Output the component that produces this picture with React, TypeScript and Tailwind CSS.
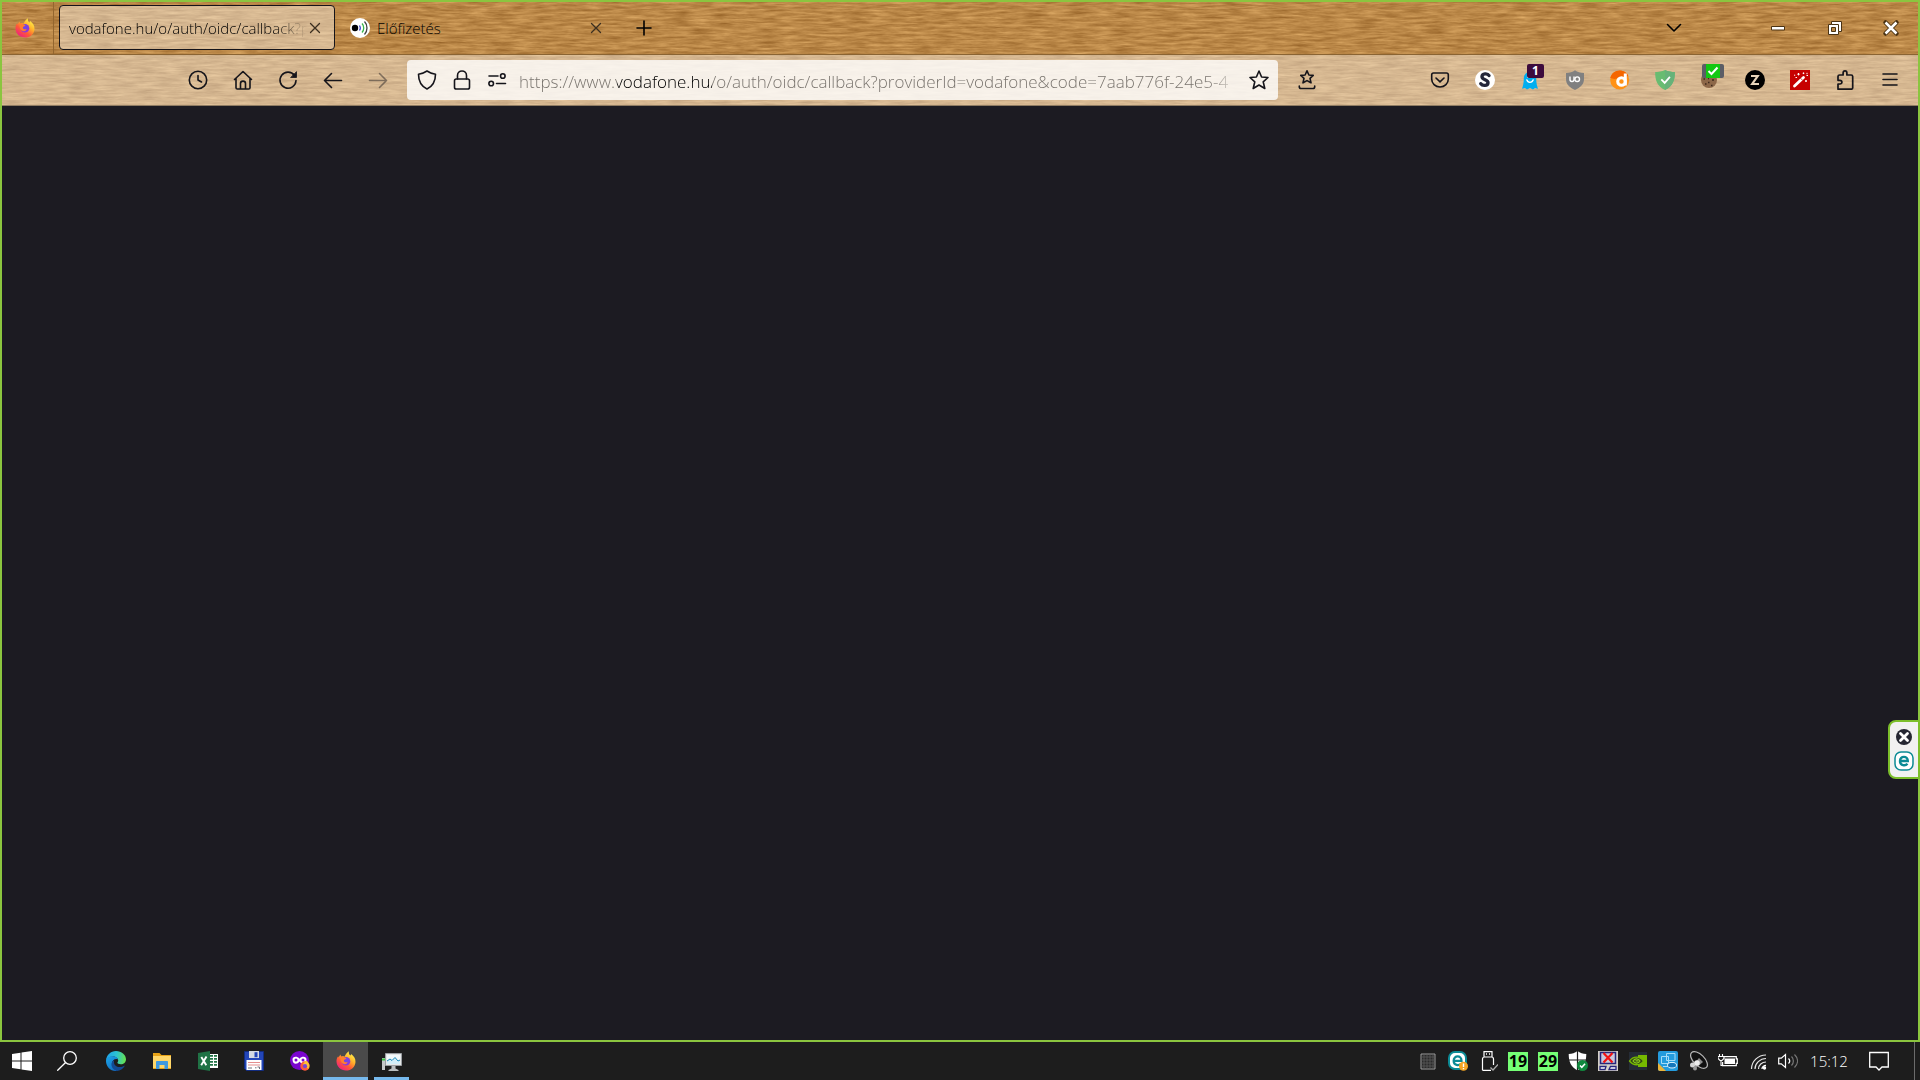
import { ReactNode, useState } from 'react';

const PAGE_URL =
  'https://www.vodafone.hu/o/auth/oidc/callback?providerId=vodafone&code=7aab776f-24e5-4';

interface IconButtonProps {
  label: string;
  children: ReactNode;
  disabled?: boolean;
}

function IconButton({ label, children, disabled }: IconButtonProps) {
  return (
    <button
      aria-label={label}
      disabled={disabled}
      className="relative flex h-10 w-[45px] shrink-0 items-center justify-center text-[#15141a] disabled:opacity-45"
    >
      {children}
    </button>
  );
}

// line icon on a 20px grid
function Line({ children, width = 1.6 }: { children: ReactNode; width?: number }) {
  return (
    <svg
      className="size-5 shrink-0"
      viewBox="0 0 20 20"
      fill="none"
      stroke="currentColor"
      strokeWidth={width}
      strokeLinecap="round"
      strokeLinejoin="round"
    >
      {children}
    </svg>
  );
}

function Pic({ children }: { children: ReactNode }) {
  return (
    <svg className="size-5 shrink-0" viewBox="0 0 20 20" fill="none">
      {children}
    </svg>
  );
}

function Firefox({ id }: { id: string }) {
  return (
    <Pic>
      <defs>
        <linearGradient id={`${id}-a`} x1="16" y1="2" x2="4" y2="18" gradientUnits="userSpaceOnUse">
          <stop offset="0" stopColor="#fff14a" />
          <stop offset="0.35" stopColor="#ffb02a" />
          <stop offset="0.65" stopColor="#ff5a36" />
          <stop offset="1" stopColor="#f0217e" />
        </linearGradient>
        <radialGradient id={`${id}-b`} cx="10" cy="9" r="5" gradientUnits="userSpaceOnUse">
          <stop offset="0" stopColor="#6a4be8" />
          <stop offset="1" stopColor="#9136d8" />
        </radialGradient>
      </defs>
      <path
        d="M13 .3c-.6 1.800.1 3.200 1.400 4.300.5-.3.700-.9.700-1.500C18 5.300 19.600 7.800 19.500 10.900 19.200 15.900 15.200 19.500 10 19.500S.6 15.600.5 10.500C.4 8.500 1.100 6.600 2.200 5.300L2.500 6.600 4.400 3.600 5.200 5.700C6.300 5.200 7.600 5.300 8.500 5.700 9.500 3.500 11 1.500 13 .3z"
        fill={`url(#${id}-a)`}
      />
      <circle cx="10" cy="10.300" r="4.300" fill={`url(#${id}-b)`} />
      <path
        d="M4.500 6c1-.7 2.800-.5 3.700.300.6.400 1.500.6 2.200.7-.2.900-1 1.500-2.200 1.700-.5.700-.3 1.900.6 2.400 1 .5 2-.3 2.900.2-.6 1.300-1.700 2-3 1.900C6 13 4.200 10.500 4.500 6z"
        fill="#ff7e2e"
      />
    </Pic>
  );
}

function Edge() {
  return (
    <Pic>
      <defs>
        <linearGradient id="edge-top" x1="1" y1="5" x2="19" y2="8" gradientUnits="userSpaceOnUse">
          <stop offset="0" stopColor="#1fa6e8" />
          <stop offset="0.5" stopColor="#2cc3d2" />
          <stop offset="1" stopColor="#62e055" />
        </linearGradient>
        <linearGradient id="edge-low" x1="0" y1="8" x2="10" y2="20" gradientUnits="userSpaceOnUse">
          <stop offset="0" stopColor="#1ba0e6" />
          <stop offset="1" stopColor="#1268bd" />
        </linearGradient>
      </defs>
      <path d="M0 9.500C.4 4 4.800 0 10 0c5.500 0 10 3.800 10 8.300 0 3-2.300 5-5.200 5-2 0-3.400-.8-3.400-1.500 0-.6.800-1 .8-2.300C12.200 7.300 9.800 5.500 7 5.500c-3.300 0-6 1.700-7 4z" fill="url(#edge-top)" />
      <path d="M0 10c0-3 3.200-4.800 6.500-4.800 2.700 0 5 1.200 5.600 3.300C9.400 7.200 6 9 6 12.800c0 3.200 2.200 5.800 5.200 7C5 20.800 0 16 0 10z" fill="url(#edge-low)" />
      <path d="M8.300 9.200C7 12.800 9.500 16 13.500 16c2 0 3.600-.6 4.800-1.300.3-.2.600.1.400.4C17 18 14 20 10.800 19.900 7.200 18.700 5 15.700 5.500 12.500c.3-1.600 1.400-2.800 2.800-3.300z" fill="#134a93" />
    </Pic>
  );
}

const extensions = [
  {
    label: 'Stylus',
    icon: (
      <Pic>
        <circle cx="10" cy="10" r="10" fill="#fff" />
        <path d="M14 5.500C12.500 3 7.200 3.300 7 6.600c-.1 3.500 6.200 2.900 6 6.200-.3 3.200-5.500 3.300-7.200.9" stroke="#25273a" strokeWidth="3.400" strokeLinecap="round" />
      </Pic>
    ),
  },
  {
    label: 'Ghostery',
    icon: (
      <Pic>
        <path d="M10 2c-4 0-6.200 2.600-6.200 6.500 0 4.200-.8 7.500-1.800 10.300l3-.8 2 1.600 3-1.600 3 1.600 2-1.600 3 .8c-1-2.800-1.800-6.100-1.800-10.300C16.200 4.600 14 2 10 2z" fill="#00aef0" />
        <path d="M6.800 9.800c1 3.400 5.400 3.400 6.400 0" stroke="#fff" strokeWidth="1.300" strokeLinecap="round" />
        <circle cx="8" cy="7" r="1.100" fill="#fff" />
        <circle cx="12" cy="7" r="1.100" fill="#fff" />
      </Pic>
    ),
    badge: (
      <span className="absolute top-1 left-5 flex h-3.5 w-[17px] items-center justify-center rounded-xs bg-[#3d0b3d] text-[12px] leading-none font-bold text-white">
        1
      </span>
    ),
  },
  {
    label: 'uBlock Origin',
    icon: (
      <Pic>
        <path d="M10 .2C7.500 2 4.500 2.800 1 3v6c0 5.500 3.500 8.500 9 10.900 5.500-2.400 9-5.400 9-10.900V3C15.500 2.800 12.500 2 10 .2z" fill="#808080" />
        <path d="M5 6.500v3c0 2.700 4 2.700 4 0v-3" stroke="#fff" strokeWidth="1.400" />
        <circle cx="12.200" cy="9.200" r="2.300" stroke="#fff" strokeWidth="1.400" />
      </Pic>
    ),
  },
  {
    label: 'Search assistant',
    icon: (
      <Pic>
        <circle cx="9.700" cy="10" r="9.500" fill="#ff9114" />
        <path d="M.2 8C1.200 3.500 5 .5 9.700.5c4 0 7.300 2.200 8.700 5.500L12 7.500 4.500 9z" fill="#f56600" />
        <circle cx="11.500" cy="11.500" r="3.800" stroke="#fff" strokeWidth="3" />
        <path d="M15.300 3.500v12" stroke="#fff" strokeWidth="3" />
      </Pic>
    ),
  },
  {
    label: 'Safe browsing',
    icon: (
      <Pic>
        <path d="M10 0C7 1.500 3.500 2 .2 2c-.2 8 1.800 14 9.800 18 8-4 10-10 9.800-18C16.500 2 13 1.500 10 0z" fill="#68bc71" />
        <path d="M10 0c3 1.500 6.500 2 9.800 2 .2 8-1.800 14-9.800 18z" fill="#67b279" />
        <path d="M6.300 9.300l3.400 3.600 5.200-6" stroke="#fff" strokeWidth="1.800" />
      </Pic>
    ),
  },
  {
    label: 'Cookie manager',
    icon: (
      <Pic>
        <circle cx="9" cy="10" r="8" fill="#8d6748" />
        <path d="M3.500 9H5M8 12.500h1.500M12 10h2M5 14h1.500M11 15.500h1.500M8 8.500h1" stroke="#3e2a1c" strokeWidth="1.500" />
      </Pic>
    ),
    badge: (
      <span className="absolute top-1 left-[15px] flex h-3.5 w-[22px] items-center justify-center rounded-xs border-x-4 border-[#5b5d66] bg-[#12c812]">
        <svg className="h-3 w-3" viewBox="0 0 12 12" fill="none" stroke="#fff" strokeWidth="2">
          <path d="M1.500 6l3 3L10.500 2.500" />
        </svg>
      </span>
    ),
  },
  {
    label: 'Zotero',
    icon: (
      <Pic>
        <circle cx="10" cy="10" r="10" fill="#000" />
        <path d="M6 6h6.700L7.200 14h6.800" stroke="#e8d5bb" strokeWidth="2.200" />
      </Pic>
    ),
  },
  {
    label: 'Magic wand',
    icon: (
      <Pic>
        <path d="M0 0h20v20H0z" fill="#c60000" />
        <path d="M4.500 16L13.500 7.500" stroke="#fff" strokeWidth="2.800" strokeLinecap="round" />
        <path d="M10.500 8.200l2 2" stroke="#c60000" strokeWidth="0.800" />
        <path d="M8.500 3v2.400M7.300 4.200h2.400M13.500 2.500v1.600M12.700 3.300h1.600M16.500 5.500h1.500M16 10v2M15 11h2M5.500 7.500H7M4 5.200h1.200M17 2.800v1.400" stroke="#fff" strokeWidth="1" />
      </Pic>
    ),
  },
  {
    label: 'Extensions',
    icon: (
      <Line width={1.7}>
        <path d="M3 19.200V14h1.800c2.800 0 2.800-3.700 0-3.700H3V6.500C3 5.600 3.500 5 4.500 5h3.600V3.200c0-3 3.800-3 3.800 0V5h4.300c.9 0 1.500.6 1.500 1.500v11.200c0 .9-.6 1.500-1.500 1.500z" />
      </Line>
    ),
  },
  {
    label: 'Open application menu',
    icon: (
      <Line>
        <path d="M3 4h14M3 9.500h14M3 15h14" />
      </Line>
    ),
  },
];

const taskbarApps = [
  {
    label: 'Excel',
    icon: (
      <Pic>
        <path d="M11 3h9v14h-9z" fill="#fff" />
        <path d="M12 4h7v1.700h-7zM12 7h7v1.700h-7zM12 10h7v1.700h-7zM12 13h7v1.700h-7z" fill="#217346" />
        <path d="M15.500 4v12" stroke="#fff" />
        <path d="M0 2l12-2v20L0 18z" fill="#207245" />
        <path d="M3.300 6l5 8.200M8.500 5.600l-5.300 8.700" stroke="#fff" strokeWidth="1.900" />
      </Pic>
    ),
  },
  {
    label: 'Total Commander',
    icon: (
      <Pic>
        <path d="M.5.5h19v19h-17l-2-2z" fill="#2346b8" stroke="#122c80" />
        <path d="M5 0h10v7H5z" fill="#d5dae3" />
        <path d="M10.500 1.200h3v5h-3z" fill="#2346b8" />
        <path d="M2.500 9h15v10h-15z" fill="#fff" />
        <path d="M4 11.500h12M4 14h12" stroke="#e58f8f" strokeWidth="1.200" />
        <path d="M4 17h4M11 16.800h1.500M13.500 16h2v2" stroke="#70727c" />
      </Pic>
    ),
  },
  {
    label: 'Firefox private browsing',
    icon: (
      <Pic>
        <circle cx="9.500" cy="9.500" r="9.500" fill="#7a05cf" />
        <path d="M2.500 8.500c0-3.500 5-3.300 7-.8 2-2.500 7-2.700 7 .8 0 5-4.600 5.500-7 2-2.400 3.500-7 3-7-2z" fill="#fff" />
        <circle cx="6" cy="8.900" r="1.500" fill="#7a05cf" />
        <circle cx="13" cy="8.900" r="1.500" fill="#7a05cf" />
        <circle cx="15" cy="15" r="4.700" fill="#ff5b3b" />
        <path d="M16 9.500c3.500 2 4.300 6 2.200 8.600L13 13z" fill="#ffc034" />
        <circle cx="15" cy="15.200" r="2.100" fill="#7846d6" />
      </Pic>
    ),
  },
  { label: 'Firefox', icon: <Firefox id="ff-task" />, state: 'active' },
  {
    label: 'Resource monitor',
    icon: (
      <Pic>
        <path d="M3.500 2.500h16v12h-16z" fill="#e6e8e8" stroke="#9a9fa3" />
        <path d="M5 4h13v9H5z" fill="#f3fafc" />
        <path d="M5 10l3-2 2 1.500 3-3 3 3.500 2-1v4H5z" fill="#d3eef8" />
        <path d="M5 10l3-2 2 1.500 3-3 3 3.500 2-1" stroke="#1687b9" />
        <path d="M9.500 15h4v2.500l3 1.500v1h-10v-1l3-1.500z" fill="#b9bdbf" />
        <path d="M0 7h3v12H0z" fill="#c5c8c9" />
        <path d="M0 8.500h3" stroke="#35c23e" strokeWidth="2" />
      </Pic>
    ),
    state: 'open',
  },
];

function DateTile({ value }: { value: string }) {
  return (
    <span className="flex h-[19px] w-5 items-center justify-center bg-[#75ff75] text-[16px] leading-none font-bold text-black">
      {value}
    </span>
  );
}

const trayItems = [
  {
    label: 'CPU usage',
    icon: (
      <Pic>
        <path d="M3 3h14v15H3z" fill="#2a2a2a" stroke="#9b9b9b" />
        <path d="M6 3v15M9 3v15M12 3v15M15 3v15M3 6h14M3 9h14M3 12h14M3 15h14" stroke="#5b5b5b" strokeWidth=".8" />
      </Pic>
    ),
  },
  {
    label: 'ESET',
    icon: (
      <Pic>
        <rect x="1" y="1" width="17" height="17" rx="6" fill="#fff" stroke="#0b8a95" strokeWidth="2" />
        <path d="M6 9.800h7.500C13.500 4 5.700 4 5.700 9.700c0 5 5.300 5.200 7.300 3" stroke="#0b8a95" strokeWidth="2.300" />
        <circle cx="15.500" cy="15.300" r="4.500" fill="#f6a623" />
        <path d="M15.500 12.500v3.500M15.500 17v1.300" stroke="#fff" strokeWidth="1.400" />
      </Pic>
    ),
  },
  {
    label: 'Safely remove hardware',
    icon: (
      <Pic>
        <path d="M6 6V.7h8V6M4.500 19.300V8c0-1.200.8-2 2-2h7c1.200 0 2 .8 2 2v6M4.500 19.300H13" stroke="#fff" strokeWidth="1.200" />
        <path d="M8 3h1M11 3h1" stroke="#fff" strokeWidth="1.500" />
        <path d="M12.500 16.500l2.500 2.500 5-5.500" stroke="#aaa" strokeWidth="1.300" />
      </Pic>
    ),
  },
  { label: 'Day 19', icon: <DateTile value="19" /> },
  { label: 'Day 29', icon: <DateTile value="29" /> },
  {
    label: 'Windows Security',
    icon: (
      <Pic>
        <path d="M9.500 0C7 2 4 3 .7 3c0 8 2.300 13 8.800 16.500C16 16 18.300 11 18.300 3 15 3 12 2 9.500 0z" fill="#fff" />
        <path d="M9.500 0v20M0 9h19" stroke="#1d1d1d" strokeWidth="1.200" />
        <circle cx="14.500" cy="14.500" r="5.500" fill="#10893e" />
        <path d="M12 14.500l1.800 1.800 3.300-3.500" stroke="#fff" strokeWidth="1.500" />
      </Pic>
    ),
  },
  {
    label: 'Disconnected',
    icon: (
      <Pic>
        <path d="M0 0h20v20H0z" fill="#d4d0c8" />
        <path d="M2.500 1.500h15v11h-15z" fill="#c9c9dc" stroke="#27277d" strokeWidth="1.500" />
        <path d="M5.500 2l9 9.500M14.500 2l-9 9.500" stroke="#f21313" strokeWidth="2.200" />
        <path d="M2 18.500v-3h6l-1 3zM11 18.500l1.500-3H18v3z" fill="#fff" stroke="#27277d" strokeWidth="1.300" />
      </Pic>
    ),
  },
  {
    label: 'NVIDIA',
    icon: (
      <Pic>
        <path d="M1 1h18v18H1z" fill="#252c36" />
        <path d="M10 4h9v12h-9z" fill="#76b900" />
        <path d="M1.500 10c3.500-5 10-5.500 14 0-3.500 5-10 5-14 0z" fill="#304713" stroke="#76b900" strokeWidth="1.300" />
        <path d="M5 10c2-3 5.500-2.500 7 0-1.500 2.500-5 3-7 0zM7.500 9.800h2.800" stroke="#8bc91c" strokeWidth="1.200" />
      </Pic>
    ),
  },
  {
    label: 'Intel Graphics',
    icon: (
      <Pic>
        <rect width="20" height="20" rx="2" fill="#249bdd" />
        <path d="M0 12l8 8H2c-1.200 0-2-.8-2-2z" fill="#e9b33a" />
        <path d="M3.500 5.500h7v7h-7zM8.500 2.500H17v7H8.500zM5 15.500h5" stroke="#a5dcf8" />
        <ellipse cx="14" cy="14.200" rx="4.500" ry="2.800" fill="#1476bb" stroke="#dff5ff" />
      </Pic>
    ),
  },
  {
    label: 'Audio manager',
    icon: (
      <Pic>
        <ellipse cx="11" cy="9" rx="10.500" ry="5.500" transform="rotate(45 11 9)" fill="#101010" stroke="#b7b7b7" strokeWidth="1.200" />
        <path d="M11 7l-6 7 3 3 7-6z" fill="#8e8e8e" />
        <circle cx="9" cy="12" r="2.800" fill="#eee" />
        <circle cx="4.500" cy="14" r="2.500" fill="#d6d6d6" />
        <circle cx="7" cy="17.500" r="2" fill="#999" />
      </Pic>
    ),
  },
  {
    label: 'Battery charging',
    icon: (
      <Pic>
        <path d="M5 5.600h13.300v2.200h1v4.600h-1v2.200H4.600V11" stroke="#fff" strokeWidth="1.200" />
        <path d="M6.500 7.500H17V13H6.500z" fill="#fff" />
        <path d="M1.500 3v3M4.500 3v3M0 5.500h6v2L4 9.500H2L0 7.500zM3 9v5.500h2" stroke="#fff" strokeWidth="1.100" />
      </Pic>
    ),
  },
  {
    label: 'Wi-Fi',
    icon: (
      <Pic>
        <path d="M3.500 18C3.500 10.500 10 4 18 4M7 18c0-5.500 5-10.500 11-10.500M10.500 18c0-4 3.500-7 7.500-7" stroke="#e5e5e5" strokeWidth="1.200" />
        <path d="M14 18c0-2 1.800-3.500 4-3.500" stroke="#fff" strokeWidth="1.300" />
        <circle cx="16.500" cy="17" r="1.700" fill="#fff" />
      </Pic>
    ),
  },
  {
    label: 'Volume',
    icon: (
      <Pic>
        <path d="M.7 7.200h2.600L7.500 3.500v13l-4.200-3.700H.7z" stroke="#fff" strokeWidth="1.200" />
        <path d="M10.500 7.500c1.500 1.500 1.500 3.500 0 5" stroke="#fff" strokeWidth="1.200" />
        <path d="M13.500 5.500c2.500 2.500 2.500 6.500 0 9M16.500 3.500c4 4 4 9 0 13" stroke="#777" strokeWidth="1.200" />
      </Pic>
    ),
  },
];

function WoodGrain() {
  return (
    <svg className="absolute inset-0 h-full w-full" aria-hidden="true">
      <filter id="grain" x="0" y="0" width="100%" height="100%" colorInterpolationFilters="sRGB">
        <feTurbulence type="fractalNoise" baseFrequency="0.045 0.4" numOctaves="4" seed="8" />
        <feColorMatrix values="0.300 0 0 0 0.580  0.300 0 0 0 0.380  0.260 0 0 0 0.150  0 0 0 0 1" />
      </filter>
      <rect width="100%" height="100%" filter="url(#grain)" />
    </svg>
  );
}

function TabBar() {
  return (
    <div className="relative flex h-[53px] items-center border-b border-[#8a6433]">
      <div className="flex h-full w-[52px] shrink-0 items-center justify-center border-r border-[#93662f] pr-1.5">
        <Firefox id="ff-tab" />
      </div>
      <div role="tablist" className="flex items-center pb-px pl-[5px]">
        <div
          role="tab"
          aria-selected="true"
          className="flex h-[45px] w-[276px] items-center rounded border border-[#15141a] bg-white/40 pl-[9px]"
        >
          <span className="w-[238px] overflow-hidden pt-0.5 text-[15px] font-[350] whitespace-nowrap text-black [mask-image:linear-gradient(to_right,#000_205px,transparent_238px)]">
            vodafone.hu/o/auth/oidc/callback?p
          </span>
          <button aria-label="Close tab" className="-ml-1 flex size-6 shrink-0 items-center justify-center text-[#3b2f20]">
            <Line width={1.3}>
              <path d="M5.500 5.500l9 9M14.500 5.500l-9 9" />
            </Line>
          </button>
        </div>
        <div role="tab" aria-selected="false" className="flex h-[45px] w-[281px] items-center pl-[15px]">
          <Pic>
            <circle cx="10" cy="10" r="10" fill="#fff" />
            <circle cx="5" cy="10" r="3.200" fill="#000" />
            <path d="M9.500 7.500c1 1.500 1 3.500 0 5" stroke="#3f48cc" strokeWidth="1.300" />
            <path d="M12 5.500c2.300 2.500 2.300 6.500 0 9" stroke="#38b54a" strokeWidth="1.300" />
            <path d="M14.500 3.500c3.300 3.500 3.300 9.500 0 13" stroke="#444" strokeWidth="1.300" />
          </Pic>
          <span className="flex-1 pt-0.5 pl-[7px] text-[15px] font-[350] text-black">Előfizetés</span>
          <button aria-label="Close tab" className="mr-2 flex size-6 items-center justify-center text-[#3b2f20]">
            <Line width={1.3}>
              <path d="M5.500 5.500l9 9M14.500 5.500l-9 9" />
            </Line>
          </button>
        </div>
      </div>
      <button aria-label="Open a new tab" className="ml-2 flex size-10 items-center justify-center text-black">
        <Line>
          <path d="M10 3v14M3 10h14" />
        </Line>
      </button>
      <div className="ml-auto flex items-center pb-px">
        <button aria-label="List all tabs" className="mr-[55px] flex size-10 items-center justify-center text-black">
          <Line>
            <path d="M3.500 6.500l6.500 6.500 6.500-6.500" />
          </Line>
        </button>
        <button aria-label="Minimize" className="flex h-10 w-[57px] items-center justify-center">
          <Pic>
            <path d="M3.500 8.500h13v3.500h-13z" fill="#fff" stroke="#4a3212" />
          </Pic>
        </button>
        <button aria-label="Restore" className="flex h-10 w-[57px] items-center justify-center">
          <Pic>
            <path d="M6.500 3.500h10v10h-3v3h-10v-10h3z" fill="#fff" stroke="#4a3212" />
            <path d="M6.500 6.500h7v7" stroke="#4a3212" />
            <path d="M6.500 9.500h4v4h-4z" fill="#bd8a48" stroke="#4a3212" />
          </Pic>
        </button>
        <button aria-label="Close" className="flex h-10 w-[55px] items-center justify-center">
          <Pic>
            <path d="M4.500 4.500l11 11M15.500 4.500l-11 11" stroke="#4a3212" strokeWidth="4.500" strokeLinecap="round" />
            <path d="M4.500 4.500l11 11M15.500 4.500l-11 11" stroke="#fff" strokeWidth="2.600" />
          </Pic>
        </button>
      </div>
    </div>
  );
}

function NavBar() {
  const [url, setUrl] = useState(PAGE_URL);

  return (
    <div className="relative flex h-[51px] items-center border-b border-[#8f7c63] bg-white/40 pr-[6px] pl-[173px]">
      <IconButton label="History">
        <Line>
          <circle cx="10" cy="10" r="8.700" />
          <path d="M10 5.500V10l3.500 2" />
        </Line>
      </IconButton>
      <IconButton label="Home">
        <Line>
          <path d="M1.500 9.500L10 1.500l8.500 8M3 8.500v9.200c0 .8.500 1.300 1.300 1.300h11.400c.8 0 1.300-.5 1.300-1.300V8.500M7.500 19v-5.500c0-3.200 5-3.200 5 0V19" />
        </Line>
      </IconButton>
      <IconButton label="Reload">
        <Line>
          <path d="M16.500 5.500A8 8 0 1 0 18 10.500" />
          <path d="M18.500 2v5.500H13z" fill="currentColor" strokeWidth="0.800" />
        </Line>
      </IconButton>
      <IconButton label="Back">
        <Line>
          <path d="M18.500 10.500h-17M8.500 3.500l-7 7 7 7" />
        </Line>
      </IconButton>
      <IconButton label="Forward" disabled>
        <Line>
          <path d="M1.500 10.500h17M11.500 3.500l7 7-7 7" />
        </Line>
      </IconButton>

      {/* address bar */}
      <div className="ml-[7px] flex h-10 min-w-0 flex-1 items-center rounded bg-white/80 text-[#15141a]">
        <div className="flex shrink-0 gap-[15px] pl-[10px]">
          <Line>
            <path d="M10 1c2.500 1.700 5 2.600 8.500 3.200C18.500 11 16 16 10 19 4 16 1.500 11 1.500 4.200 5 3.600 7.500 2.700 10 1z" />
          </Line>
          <Line>
            <rect x="2.500" y="9" width="15" height="10" rx="1.800" />
            <path d="M5.500 9V5.500c0-6 9-6 9 0V9" />
          </Line>
          <Line>
            <path d="M2 6h9M9.500 13.500h9" />
            <circle cx="15.800" cy="6" r="2.300" />
            <circle cx="4.200" cy="13.500" r="2.300" />
          </Line>
        </div>
        <input
          aria-label="Search or enter address"
          value={url}
          onChange={(e) => setUrl(e.target.value)}
          spellCheck={false}
          className="ml-3 h-10 min-w-0 flex-1 bg-[linear-gradient(to_right,#75706a_98px,#000_98px,#000_193px,#75706a_193px)] bg-clip-text pt-0.5 text-[17px] font-[350] text-transparent caret-black outline-none [mask-image:linear-gradient(to_left,transparent,#000_32px)]"
        />
        <button aria-label="Bookmark this page" className="mr-2 ml-2 shrink-0 p-px">
          <Line>
            <path d="M10 1l2.600 6 6.400.5-4.800 4.300 1.600 6.700L10 15l-5.800 3.500 1.600-6.700L1 7.500 7.400 7z" />
          </Line>
        </button>
      </div>

      <div className="ml-[6px] mr-[88px] flex">
        <IconButton label="Show bookmarks">
          <Line>
            <path d="M10 .8l1.900 4.200 4.300.4-3.200 3 1 4.400L10 10.600l-4 2.200 1-4.400L3.800 5.400 8.100 5zM2.300 16v.7c0 1.200.7 1.800 1.800 1.800h11.800c1.100 0 1.800-.6 1.800-1.800V16" />
          </Line>
        </IconButton>
      </div>
      <IconButton label="Save to Pocket">
        <Line>
          <path d="M3.500 3h13c1 0 1.800.7 1.800 1.800V9c0 4.500-3.500 8-8.300 8s-8.300-3.500-8.300-8V4.800C1.700 3.700 2.500 3 3.500 3zM6 8l4 3.800L14 8" />
        </Line>
      </IconButton>
      {extensions.map((ext) => (
        <IconButton key={ext.label} label={ext.label}>
          {ext.icon}
          {ext.badge}
        </IconButton>
      ))}
    </div>
  );
}

function Taskbar() {
  return (
    <footer className="flex h-[38px] shrink-0 items-center bg-[#1d1d1d]">
      <button aria-label="Start" className="flex h-full w-11 items-center justify-center">
        <Pic>
          <path d="M0 3l8.500-1.200v7.700H0zM9.500 1.600L20 0v9.500H9.500zM0 10.500h8.500v7.700L0 17zM9.500 10.500H20V20L9.500 18.400z" fill="#fff" />
        </Pic>
      </button>
      <button aria-label="Search" className="flex h-full w-[46px] items-center justify-center text-white">
        <Line width={1.3}>
          <circle cx="13" cy="7" r="6.300" />
          <path d="M8.300 11.700L.7 19.300" />
        </Line>
      </button>
      <div className="flex h-full gap-px pl-[3px]">
        <button aria-label="Edge" className="flex h-full w-[45px] items-center justify-center">
          <Edge />
        </button>
        <button aria-label="File Explorer" className="flex h-full w-[45px] items-center justify-center">
          <Pic>
            <path d="M1 2h6.500l2 2H19v14H1z" fill="#e8a317" />
            <path d="M1 5h18v12H1z" fill="#ffd76a" />
            <path d="M4 18v-7c0-.6.400-1 1-1h10c.6 0 1 .4 1 1v7h-3.500v-4h-5v4z" fill="#3f9ae0" />
          </Pic>
        </button>
        {taskbarApps.map((app) => (
          <button
            key={app.label}
            aria-label={app.label}
            className={`relative flex h-full w-[45px] items-center justify-center ${
              app.state === 'active' ? 'bg-[#4a4a4a]' : ''
            }`}
          >
            {app.icon}
            {app.state && (
              <span
                className={`absolute bottom-0 h-[3px] bg-[#76b9ed] ${
                  app.state === 'active' ? 'inset-x-0' : 'inset-x-[5px]'
                }`}
              />
            )}
          </button>
        ))}
      </div>

      <div className="ml-auto flex h-full items-center">
        {trayItems.map((item) => (
          <button key={item.label} aria-label={item.label} className="flex h-full w-[30px] items-center justify-center">
            {item.icon}
          </button>
        ))}
        <time className="w-[52px] text-center text-[15px] font-[350] text-white">15:12</time>
        <button aria-label="Notifications" className="flex h-full w-12 items-center justify-center text-white">
          <Line width={1.3}>
            <path d="M.7 1.500h18.600v14.500H13l-3 3-3-3H.7z" strokeLinejoin="miter" />
          </Line>
        </button>
        <button aria-label="Show desktop" className="ml-[11px] h-full w-1.5 border-l border-[#6b6b6b]" />
      </div>
    </footer>
  );
}

export default function App() {
  return (
    <div className="flex h-screen flex-col bg-[#1c1b22] font-['Open_Sans','Noto_Sans',sans-serif]">
      <div className="relative flex min-h-0 flex-1 flex-col border-2 border-[#8bc53f]">
        <header className="relative">
          <WoodGrain />
          <TabBar />
          <NavBar />
        </header>
        <main className="flex-1 bg-[#1c1b22]" />

        {/* ESET secured browser handle */}
        <div className="absolute -right-0.5 bottom-[261px] flex h-[59px] w-8 flex-col items-center justify-center gap-1.5 rounded-l-lg border-2 border-[#7cbf2b] bg-[#f1f1f1]">
          <button aria-label="Close panel">
            <svg className="size-4" viewBox="0 0 16 16" fill="none">
              <circle cx="8" cy="8" r="8" fill="#252732" />
              <path d="M4.500 4.500l7 7M11.500 4.500l-7 7" stroke="#fff" strokeWidth="2.800" strokeLinecap="round" />
            </svg>
          </button>
          <button aria-label="ESET">
            <Pic>
              <rect x="1" y="1" width="18" height="18" rx="6" fill="#fff" stroke="#0b8a95" strokeWidth="1.500" />
              <path d="M6.300 10h7.500c0-5.500-7.800-5.500-7.800 0 0 5 5.500 5 7.500 2.800" stroke="#0b8a95" strokeWidth="2.400" />
            </Pic>
          </button>
        </div>
      </div>
      <Taskbar />
    </div>
  );
}
